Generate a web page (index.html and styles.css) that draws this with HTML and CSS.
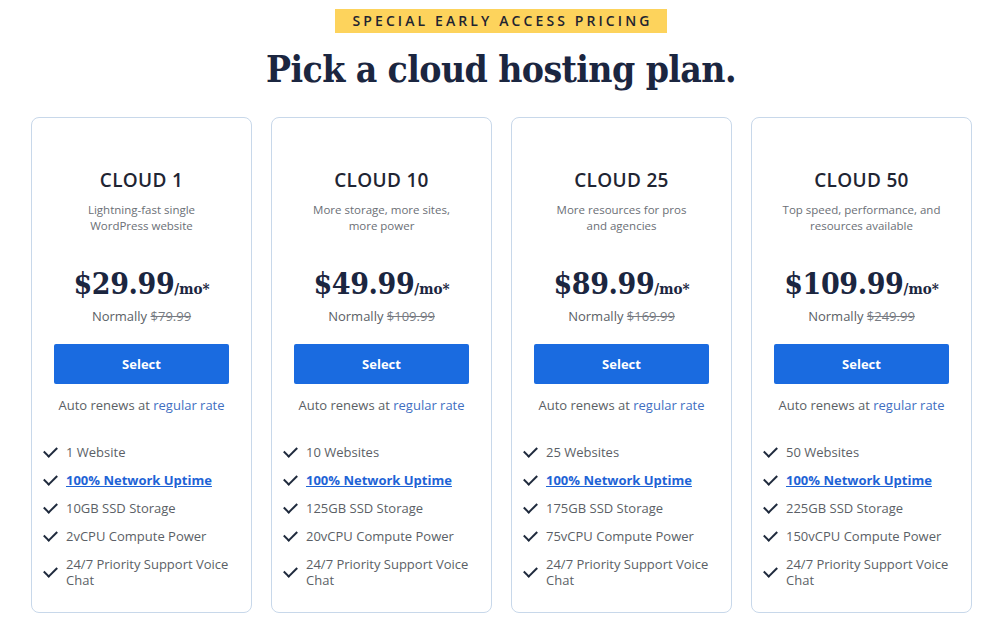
FILE: index.html
```html
<!DOCTYPE html>
<html lang="en">
<head>
  <meta charset="UTF-8" />
  <meta name="viewport" content="width=device-width, initial-scale=1.0"/>
  <title>Pick a cloud hosting plan</title>
  <link rel="stylesheet" href="styles.css">
</head>
<body>

  <header class="intro">
    <span class="badge">Special early access pricing</span>
    <h1 class="headline">Pick a cloud hosting plan.</h1>
  </header>

  <section class="plans">

    <div class="plan">
      <h2 class="plan-name">CLOUD 1</h2>
      <p class="plan-desc">Lightning-fast single<br>WordPress website</p>
      <div class="price"><span class="amount">$29.99</span><span class="per">/mo*</span></div>
      <p class="normally">Normally <s>$79.99</s></p>
      <button class="select">Select</button>
      <p class="renew">Auto renews at <a href="#">regular rate</a></p>
      <ul class="features">
        <li>1 Website</li>
        <li><a href="#">100% Network Uptime</a></li>
        <li>10GB SSD Storage</li>
        <li>2vCPU Compute Power</li>
        <li>24/7 Priority Support Voice Chat</li>
      </ul>
    </div>

    <div class="plan">
      <h2 class="plan-name">CLOUD 10</h2>
      <p class="plan-desc">More storage, more sites,<br>more power</p>
      <div class="price"><span class="amount">$49.99</span><span class="per">/mo*</span></div>
      <p class="normally">Normally <s>$109.99</s></p>
      <button class="select">Select</button>
      <p class="renew">Auto renews at <a href="#">regular rate</a></p>
      <ul class="features">
        <li>10 Websites</li>
        <li><a href="#">100% Network Uptime</a></li>
        <li>125GB SSD Storage</li>
        <li>20vCPU Compute Power</li>
        <li>24/7 Priority Support Voice Chat</li>
      </ul>
    </div>

    <div class="plan">
      <h2 class="plan-name">CLOUD 25</h2>
      <p class="plan-desc">More resources for pros<br>and agencies</p>
      <div class="price"><span class="amount">$89.99</span><span class="per">/mo*</span></div>
      <p class="normally">Normally <s>$169.99</s></p>
      <button class="select">Select</button>
      <p class="renew">Auto renews at <a href="#">regular rate</a></p>
      <ul class="features">
        <li>25 Websites</li>
        <li><a href="#">100% Network Uptime</a></li>
        <li>175GB SSD Storage</li>
        <li>75vCPU Compute Power</li>
        <li>24/7 Priority Support Voice Chat</li>
      </ul>
    </div>

    <div class="plan">
      <h2 class="plan-name">CLOUD 50</h2>
      <p class="plan-desc">Top speed, performance, and<br>resources available</p>
      <div class="price"><span class="amount">$109.99</span><span class="per">/mo*</span></div>
      <p class="normally">Normally <s>$249.99</s></p>
      <button class="select">Select</button>
      <p class="renew">Auto renews at <a href="#">regular rate</a></p>
      <ul class="features">
        <li>50 Websites</li>
        <li><a href="#">100% Network Uptime</a></li>
        <li>225GB SSD Storage</li>
        <li>150vCPU Compute Power</li>
        <li>24/7 Priority Support Voice Chat</li>
      </ul>
    </div>

  </section>

</body>
</html>
```

FILE: styles.css
```css
* {
  box-sizing: border-box;
  margin: 0;
  padding: 0;
}

body {
  font-family: "Open Sans", "DejaVu Sans", sans-serif;
  background: #fff;
  color: #5b5f66;
}

.intro {
  display: flex;
  flex-direction: column;
  align-items: center;
  padding: 9px 6px 0 0;
}

.badge {
  display: inline-block;
  background: #fdd35c;
  color: #1f2430;
  font-size: 14px;
  font-weight: 600;
  letter-spacing: 3.1px;
  text-transform: uppercase;
  padding: 3px 14px 3px 17px;
  line-height: 18px;
}

.headline {
  font-family: "DejaVu Serif Condensed", "DejaVu Serif", serif;
  font-weight: 700;
  font-size: 37px;
  color: #1b2640;
  letter-spacing: -0.6px;
  margin-top: 12px;
  line-height: 48px;
}

.plans {
  display: grid;
  grid-template-columns: repeat(4, 221px);
  gap: 19px;
  margin: 24px 0 0 31px;
}

.plan {
  border: 1px solid #c8d8ea;
  border-radius: 8px;
  padding: 50px 22px 24px;
  text-align: center;
  height: 496px;
}

.plan-name {
  font-size: 19px;
  font-weight: 600;
  color: #1f2533;
  letter-spacing: 0.3px;
  line-height: 24px;
}

.plan-desc {
  font-size: 11.5px;
  line-height: 16px;
  color: #6b6f76;
  margin-top: 10px;
}

.price {
  margin-top: 30px;
  font-family: "DejaVu Serif Condensed", "DejaVu Serif", serif;
  font-weight: 700;
  color: #1b2640;
  line-height: 40px;
}

.amount {
  font-size: 30px;
  letter-spacing: -0.4px;
}

.per {
  font-size: 15px;
}

.normally {
  font-size: 13px;
  line-height: 18px;
  color: #5b5f66;
  margin-top: -2px;
}

.normally s {
  color: #777b82;
}

.select {
  display: block;
  width: 100%;
  height: 40px;
  margin-top: 19px;
  background: #1a6be0;
  border: none;
  border-radius: 2px;
  color: #fff;
  font-family: inherit;
  font-size: 13px;
  font-weight: 700;
  cursor: pointer;
}

.renew {
  font-size: 13px;
  line-height: 18px;
  margin-top: 12px;
  color: #5b5f66;
}

.renew a {
  color: #3f6fc2;
  text-decoration: none;
}

.features {
  list-style: none;
  text-align: left;
  margin: 30px -8px 0 -12px;
}

.features li {
  position: relative;
  padding-left: 24px;
  font-size: 13px;
  line-height: 16px;
  margin-bottom: 12px;
  display: flex;
  align-items: center;
}

.features li::before {
  content: "";
  position: absolute;
  left: 2px;
  top: 50%;
  width: 11px;
  height: 6px;
  border-left: 2px solid #1f2a3d;
  border-bottom: 2px solid #1f2a3d;
  transform: translateY(-70%) rotate(-45deg);
}

.features a {
  color: #1e63d6;
  font-weight: 700;
  text-decoration: underline;
}
```
